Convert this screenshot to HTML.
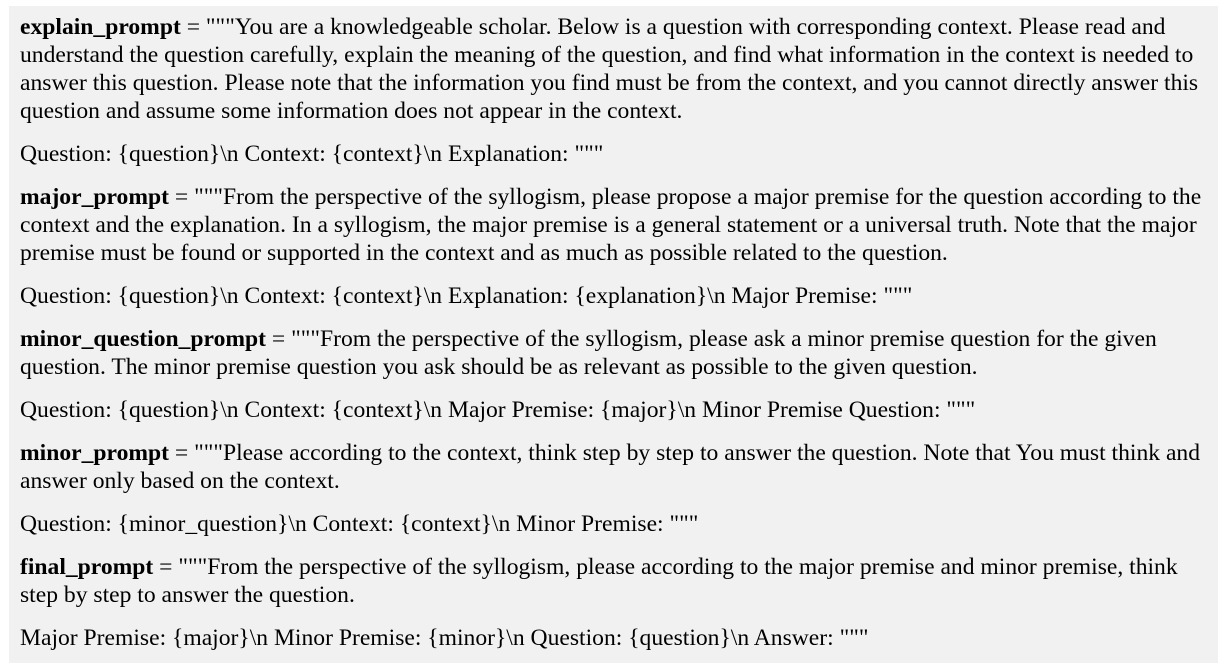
<!DOCTYPE html>
<html><head><style>
body{margin:0;background:#fff;width:1225px;height:670px;overflow:hidden}
.box{position:absolute;left:9px;top:6px;width:1209px;height:657px;background:#f1f1f1;}
.in{padding:7px 0 0 11px;font-family:"Liberation Serif",serif;font-size:23.6px;line-height:28px;color:#000;white-space:nowrap}
p{margin:0 0 15px 0}
</style></head><body><div class="box"><div class="in">
<p><b>explain_prompt</b> = """You are a knowledgeable scholar. Below is a question with corresponding context. Please read and<br>understand the question carefully, explain the meaning of the question, and find what information in the context is needed to<br>answer this question. Please note that the information you find must be from the context, and you cannot directly answer this<br>question and assume some information does not appear in the context.</p>
<p>Question: {question}\n Context: {context}\n Explanation: """</p>
<p><b>major_prompt</b> = """From the perspective of the syllogism, please propose a major premise for the question according to the<br>context and the explanation. In a syllogism, the major premise is a general statement or a universal truth. Note that the major<br>premise must be found or supported in the context and as much as possible related to the question.</p>
<p>Question: {question}\n Context: {context}\n Explanation: {explanation}\n Major Premise: """</p>
<p><b>minor_question_prompt</b> = """From the perspective of the syllogism, please ask a minor premise question for the given<br>question. The minor premise question you ask should be as relevant as possible to the given question.</p>
<p>Question: {question}\n Context: {context}\n Major Premise: {major}\n Minor Premise Question: """</p>
<p><b>minor_prompt</b> = """Please according to the context, think step by step to answer the question. Note that You must think and<br>answer only based on the context.</p>
<p>Question: {minor_question}\n Context: {context}\n Minor Premise: """</p>
<p><b>final_prompt</b> = """From the perspective of the syllogism, please according to the major premise and minor premise, think<br>step by step to answer the question.</p>
<p>Major Premise: {major}\n Minor Premise: {minor}\n Question: {question}\n Answer: """</p>
</div></div></body></html>
